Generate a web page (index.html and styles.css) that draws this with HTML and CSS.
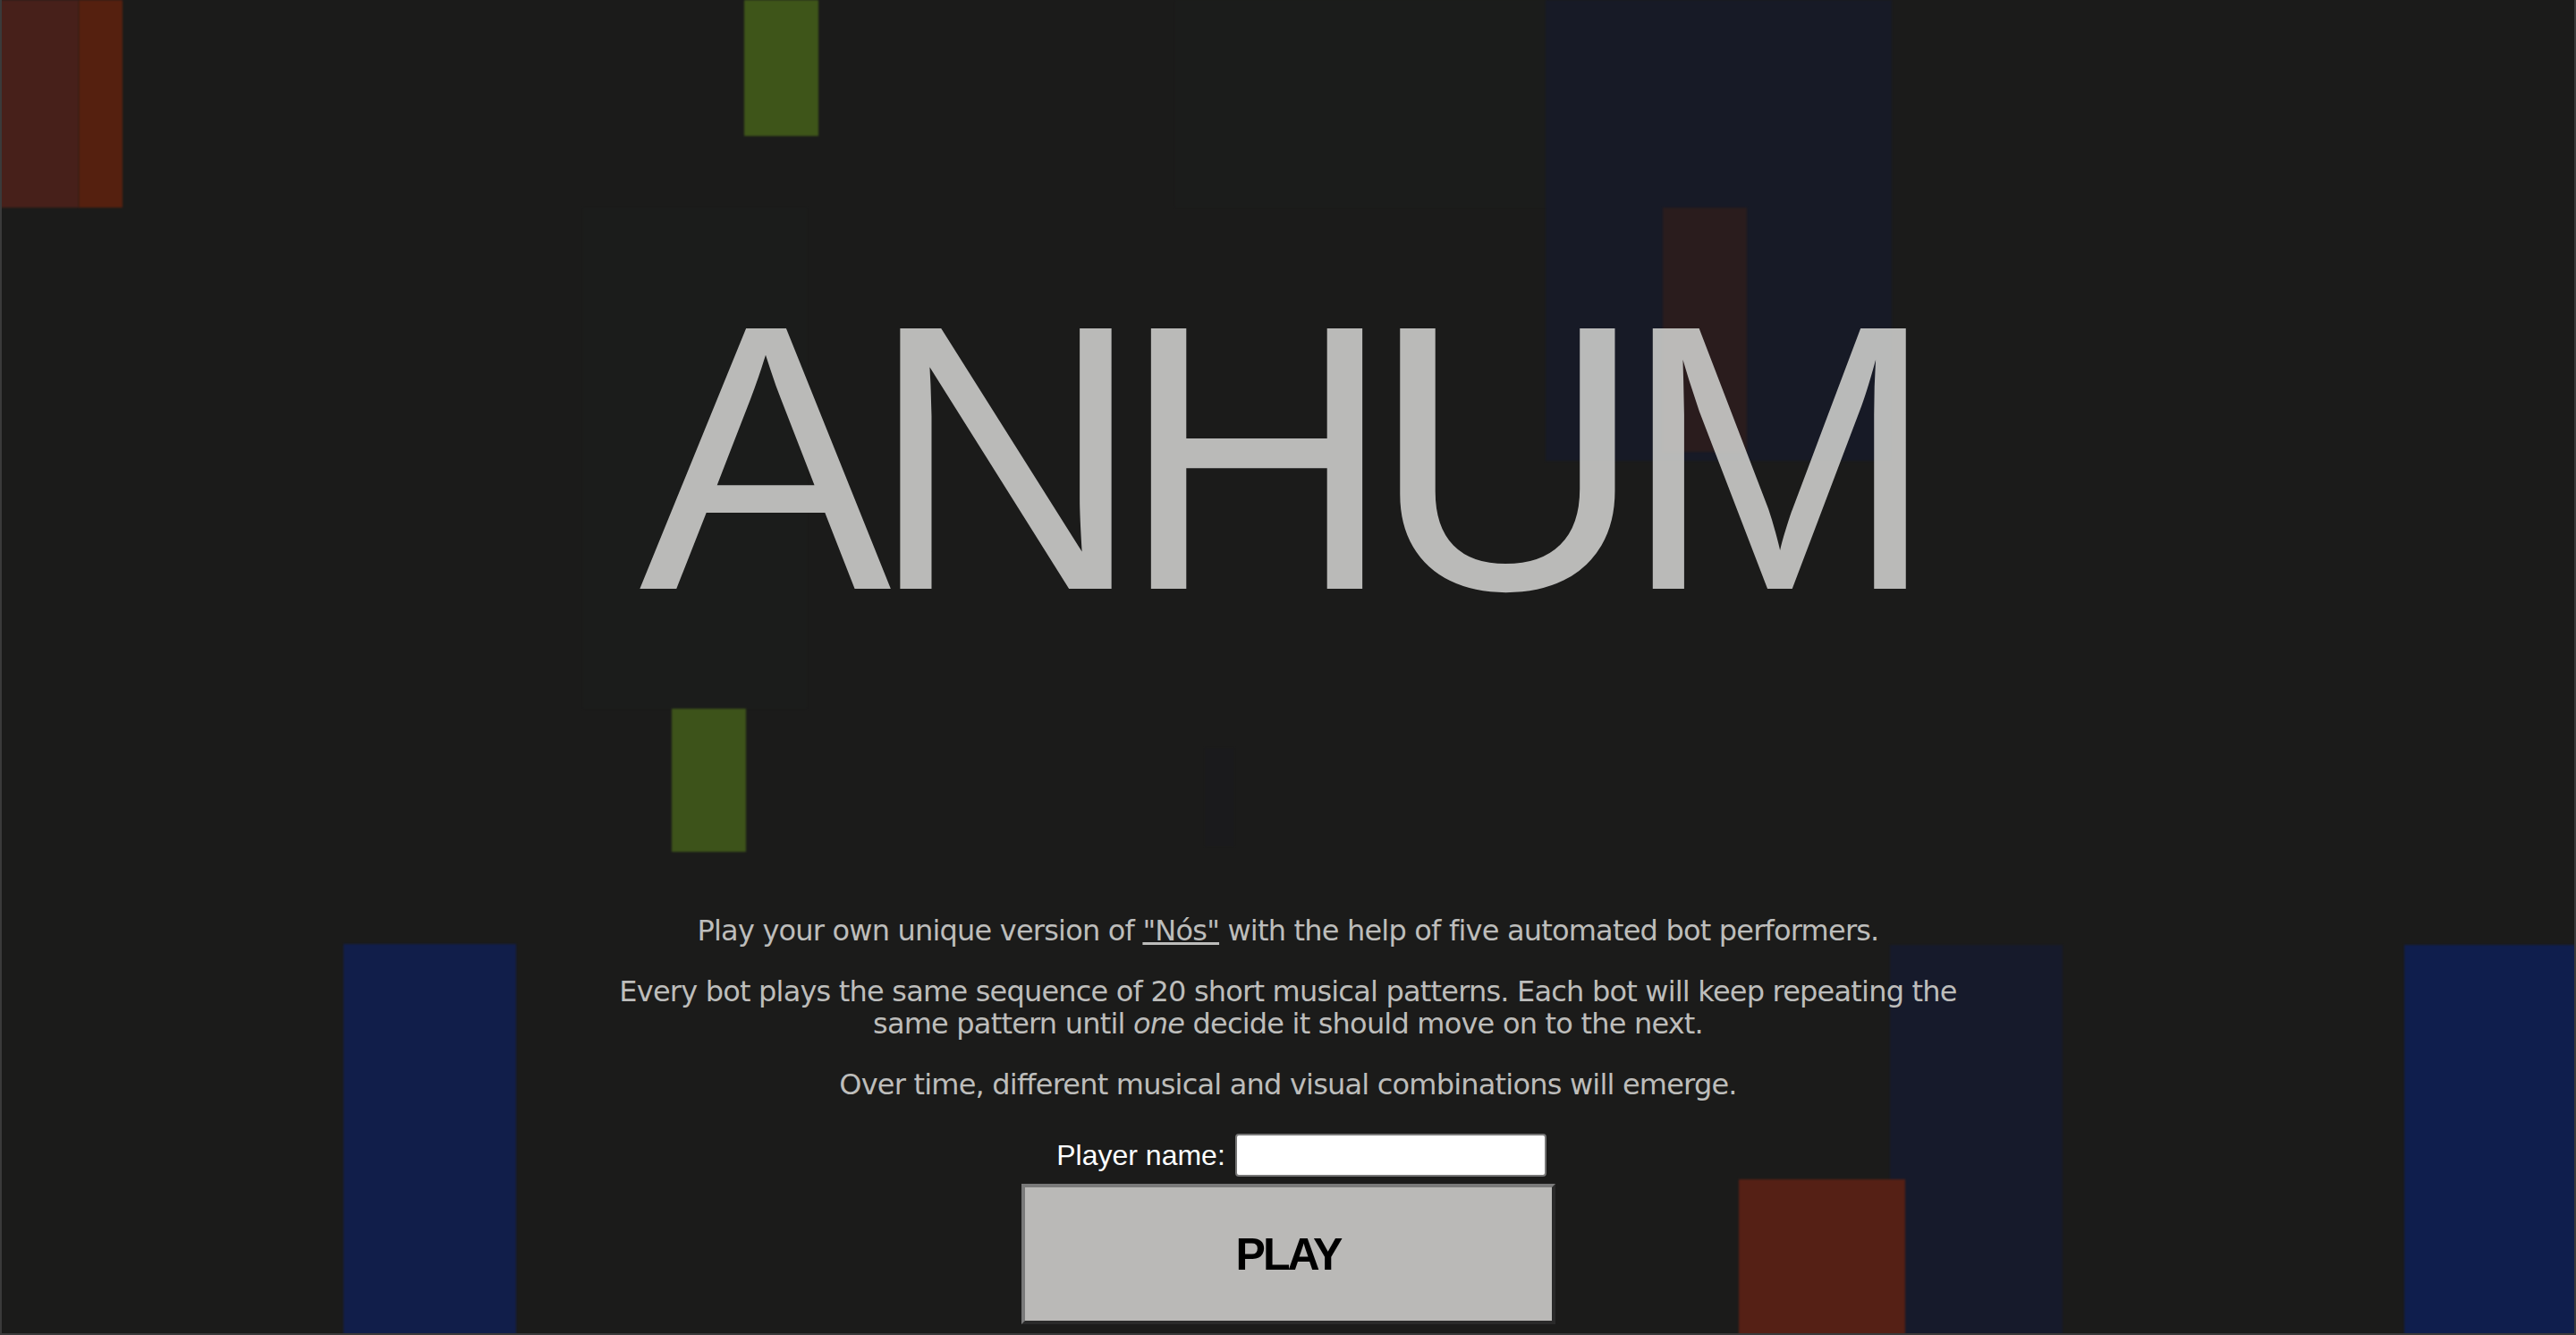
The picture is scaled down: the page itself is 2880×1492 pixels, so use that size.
FILE: index.html
```html
<!DOCTYPE html>
<html lang="en">
<head>
<meta charset="utf-8">
<title>ANHUM</title>
<link rel="stylesheet" href="styles.css">
</head>
<body>
<div class="canvas" aria-hidden="true">
  <div class="blk blk-f1"></div>
  <div class="blk blk-f2"></div>
  <div class="blk blk-f3"></div>
  <div class="blk blk-r1"></div>
  <div class="blk blk-r2"></div>
  <div class="blk blk-g1"></div>
  <div class="blk blk-db1"></div>
  <div class="blk blk-dr1"></div>
  <div class="blk blk-g2"></div>
  <div class="blk blk-b1"></div>
  <div class="blk blk-db2"></div>
  <div class="blk blk-r3"></div>
  <div class="blk blk-b2"></div>
</div>
<main class="stage">
  <h1 class="title">ANHUM</h1>
  <div class="intro">
    <p>Play your own unique version of <a href="#">"Nós"</a> with the help of five automated bot performers.</p>
    <p>Every bot plays the same sequence of 20 short musical patterns. Each bot will keep repeating the<br>same pattern until <em>one</em> decide it should move on to the next.</p>
    <p>Over time, different musical and visual combinations will emerge.</p>
  </div>
  <form class="join">
    <div class="name-row">
      <label class="name-label" for="player">Player name:</label>
      <input class="name-input" id="player" type="text">
    </div>
    <button class="play-btn" type="button">PLAY</button>
  </form>
</main>
</body>
</html>
```

FILE: styles.css
```css
* { box-sizing: border-box; }

html, body {
  margin: 0;
  height: 100%;
}

body {
  background: #1b1b1a;
  overflow: hidden;
  position: relative;
  border-left: 2px solid #3a3a3a;
  border-right: 2px solid #3a3a3a;
  border-bottom: 2px solid #3a3a3a;
  font-family: "Liberation Sans", Arial, sans-serif;
}

.canvas {
  position: absolute;
  inset: 0;
  overflow: hidden;
}

.blk {
  position: absolute;
  filter: blur(1.2px);
}

.blk-r1 { left: -2px; top: 0; width: 88px; height: 232px; background: #47201a; }
.blk-r2 { left: 86px; top: 0; width: 49px; height: 232px; background: #55200f; }
.blk-g1 { left: 830px; top: 0; width: 83px; height: 152px; background: #3e5519; }
.blk-db1 { left: 1726px; top: 0; width: 387px; height: 515px; background: #171a26; }
.blk-dr1 { left: 1857px; top: 232px; width: 94px; height: 273px; background: #2a1c1d; }
.blk-g2 { left: 749px; top: 792px; width: 83px; height: 160px; background: #3d531a; }
.blk-b1 { left: 382px; top: 1055px; width: 193px; height: 437px; background: #111e4a; }
.blk-db2 { left: 2111px; top: 1056px; width: 193px; height: 436px; background: #161a2b; }
.blk-r3 { left: 1942px; top: 1318px; width: 186px; height: 174px; background: #552015; }
.blk-b2 { left: 2686px; top: 1056px; width: 194px; height: 436px; background: #0f1e4d; }
.blk-f1 { left: 1312px; top: 0; width: 416px; height: 232px; background: #1b1c1b; }
.blk-f2 { left: 650px; top: 232px; width: 250px; height: 560px; background: #1b1c1b; }
.blk-f3 { left: 1345px; top: 836px; width: 33px; height: 110px; background: #1a1a1c; }

.stage {
  position: relative;
  z-index: 1;
  display: flex;
  flex-direction: column;
  align-items: center;
  padding-top: 300px;
}

.title {
  margin: 0 0 0 -25px;
  font-family: "Liberation Sans", Arial, sans-serif;
  font-weight: 400;
  font-size: 423px;
  line-height: 423px;
  letter-spacing: -25px;
  color: rgba(200, 200, 198, 0.92);
}

.intro {
  margin-top: 299px;
  text-align: center;
  color: #bdbdbb;
  font-family: "DejaVu Sans", "Liberation Sans", sans-serif;
  font-size: 32px;
  line-height: 36px;
  letter-spacing: -0.8px;
}

.intro p {
  margin: 0 0 32px;
}

.intro a {
  color: #bdbdbb;
  text-decoration: underline;
}

.join {
  display: flex;
  flex-direction: column;
  align-items: center;
  margin-top: 5px;
}

.name-row {
  display: flex;
  align-items: center;
  gap: 11px;
  padding-left: 30px;
}

.name-label {
  color: #ffffff;
  font-size: 32px;
}

.name-input {
  width: 348px;
  height: 48px;
  background: #ffffff;
  border: 2px solid #767676;
  border-radius: 4px;
}

.play-btn {
  margin-top: 8px;
  width: 597px;
  height: 157px;
  background: #bab9b7;
  border: 4px solid;
  border-color: #7a7a7a #2a2a2a #2a2a2a #7a7a7a;
  color: #000000;
  font-family: "Liberation Sans", Arial, sans-serif;
  font-weight: 700;
  font-size: 50px;
  letter-spacing: -3px;
  padding: 0;
}
```
